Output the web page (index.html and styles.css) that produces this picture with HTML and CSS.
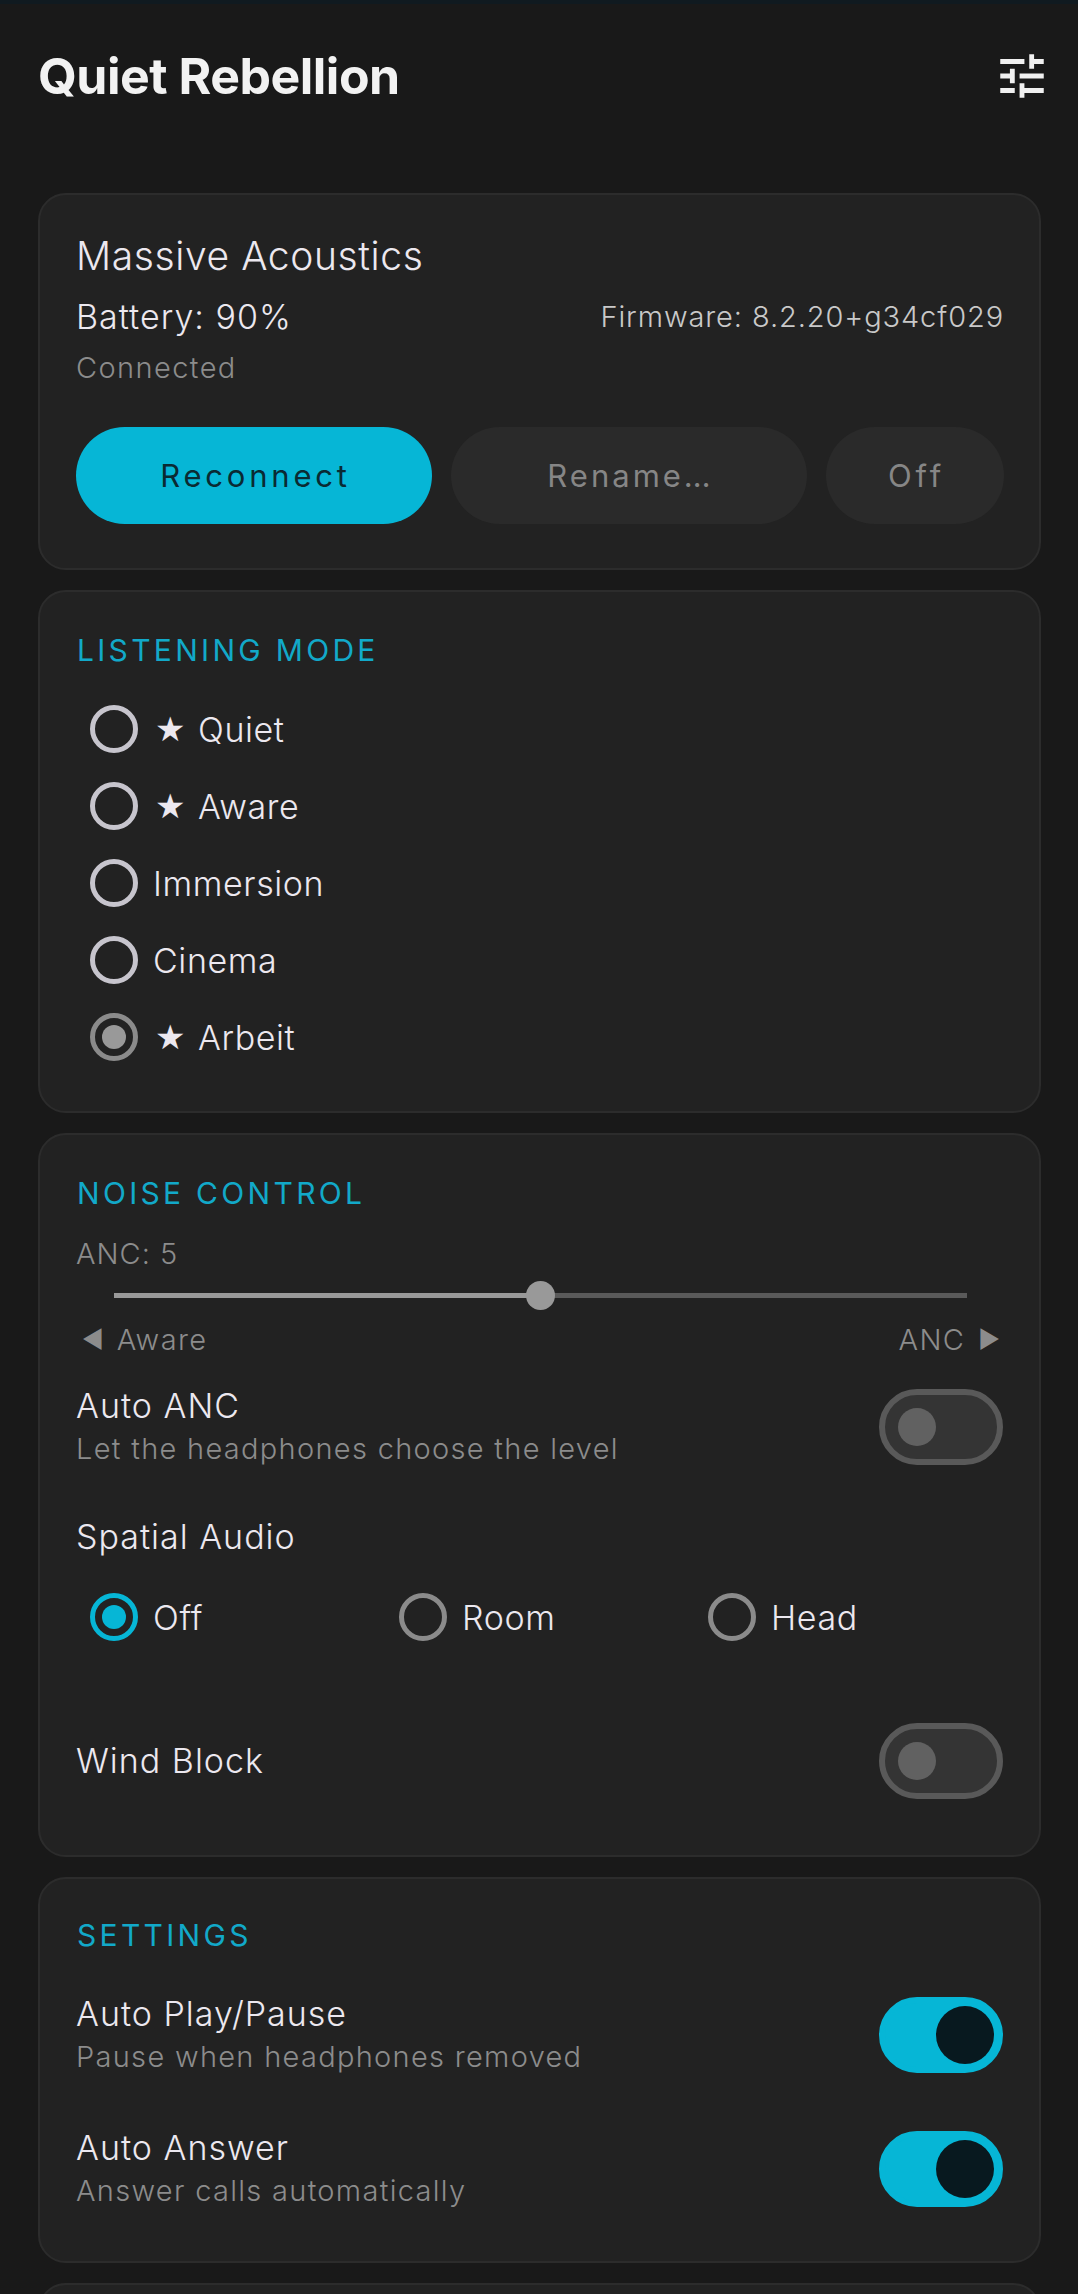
FILE: index.html
```html
<!DOCTYPE html>
<html>

<head>
  <title>Quiet Rebellion</title>
  <link rel="stylesheet" href="styles.css">
</head>

<body>
  <div class="status-strip"></div>
  <header class="app-bar">
    <h1>Quiet Rebellion</h1>
    <svg class="tune-icon" viewBox="0 0 24 24">
      <path d="M3 17v2h6v-2H3zM3 5v2h10V5H3zm10 16v-2h8v-2h-8v-2h-2v6h2zM7 9v2H3v2h4v2h2V9H7zm14 4v-2H11v2h10zm-6-4h2V7h4V5h-4V3h-2v6z"></path>
    </svg>
  </header>

  <main class="cards">
    <section class="card device-card">
      <div class="device-name">Massive Acoustics</div>
      <div class="device-info">
        <span class="battery">Battery: 90%</span>
        <span class="firmware">Firmware: 8.2.20+g34cf029</span>
      </div>
      <div class="connection">Connected</div>
      <div class="device-actions">
        <button class="btn btn-primary">Reconnect</button>
        <button class="btn btn-rename">Rename…</button>
        <button class="btn">Off</button>
      </div>
    </section>

    <section class="card mode-card">
      <h2>LISTENING MODE</h2>
      <div class="mode-list">
        <label class="radio-row"><span class="radio"></span><span class="star">★</span><span class="radio-text">Quiet</span></label>
        <label class="radio-row"><span class="radio"></span><span class="star">★</span><span class="radio-text">Aware</span></label>
        <label class="radio-row"><span class="radio"></span><span class="radio-text">Immersion</span></label>
        <label class="radio-row"><span class="radio"></span><span class="radio-text">Cinema</span></label>
        <label class="radio-row"><span class="radio radio-muted"></span><span class="star">★</span><span class="radio-text">Arbeit</span></label>
      </div>
    </section>

    <section class="card noise-card">
      <h2>NOISE CONTROL</h2>
      <div class="anc-value">ANC: 5</div>
      <div class="slider">
        <div class="slider-fill"></div>
        <div class="slider-thumb"></div>
      </div>
      <div class="slider-labels">
        <span class="slider-label"><span class="arrow">◄</span>Aware</span>
        <span class="slider-label">ANC<span class="arrow">►</span></span>
      </div>
      <div class="switch-row auto-anc">
        <div>
          <div class="row-title">Auto ANC</div>
          <div class="row-sub">Let the headphones choose the level</div>
        </div>
        <div class="switch"></div>
      </div>
      <div class="row-title spatial-title">Spatial Audio</div>
      <div class="spatial-options">
        <label class="radio-row"><span class="radio radio-on"></span><span class="radio-text">Off</span></label>
        <label class="radio-row"><span class="radio radio-grey"></span><span class="radio-text">Room</span></label>
        <label class="radio-row"><span class="radio radio-grey"></span><span class="radio-text">Head</span></label>
      </div>
      <div class="switch-row wind-block">
        <div class="row-title">Wind Block</div>
        <div class="switch"></div>
      </div>
    </section>

    <section class="card settings-card">
      <h2>SETTINGS</h2>
      <div class="switch-row auto-play">
        <div>
          <div class="row-title">Auto Play/Pause</div>
          <div class="row-sub">Pause when headphones removed</div>
        </div>
        <div class="switch switch-on"></div>
      </div>
      <div class="switch-row auto-answer">
        <div>
          <div class="row-title">Auto Answer</div>
          <div class="row-sub">Answer calls automatically</div>
        </div>
        <div class="switch switch-on"></div>
      </div>
    </section>

    <section class="card last-card"></section>
  </main>
</body>

</html>
```

FILE: styles.css
```css
html,
body {
  height: 2294px;
  margin: 0;
  overflow: hidden;
}

body {
  background-color: #191919;
  color: #ece8ef;
  font-family: 'Inter', sans-serif;
  font-weight: 300;
}

.status-strip {
  height: 4px;
  background-color: #101a20;
}

.app-bar {
  height: 148px;
  padding: 0 27px 4px 38px;
  box-sizing: border-box;
  display: flex;
  align-items: center;
  justify-content: space-between;
}

.app-bar h1 {
  margin: 0;
  color: #f2f2f2;
  font-size: 50px;
  font-weight: 700;
  letter-spacing: -0.5px;
}

.tune-icon {
  width: 58px;
  height: 58px;
  fill: #f0f0f0;
}

.cards {
  margin: 41px 37px 0 38px;
  display: flex;
  flex-direction: column;
  gap: 20px;
}

.card {
  box-sizing: border-box;
  padding: 0 35px 0 36px;
  background-color: #222222;
  border: 2px solid #2c2c2c;
  border-radius: 28px;
}

.card h2 {
  margin: 0 0 0 1px;
  color: #12a9c9;
  font-size: 30px;
  font-weight: 400;
  line-height: 36px;
  letter-spacing: 3.3px;
}

.device-card {
  height: 377px;
  padding-top: 38px;
}

.device-name {
  font-size: 39px;
  line-height: 46px;
  letter-spacing: 0.6px;
}

.device-info {
  margin-top: 15px;
  height: 44px;
  display: flex;
  align-items: center;
  justify-content: space-between;
}

.battery {
  font-size: 34px;
  letter-spacing: 1px;
}

.firmware {
  font-size: 29px;
  letter-spacing: 0.9px;
  color: #c9c9c9;
}

.connection {
  margin-top: 12px;
  color: #8c8c8c;
  font-size: 29px;
  line-height: 36px;
  letter-spacing: 1.4px;
}

.device-actions {
  margin-top: 41px;
  display: grid;
  grid-template-columns: 2fr 2fr 1fr;
  gap: 19px;
}

.btn {
  height: 97px;
  padding: 0 0 0 3px;
  border: none;
  border-radius: 49px;
  background-color: #2a2a2a;
  color: #868686;
  font-family: inherit;
  font-size: 31px;
  letter-spacing: 3.8px;
}

.btn-primary {
  background-color: #06b6d6;
  color: #0a2a33;
}

.btn-rename {
  letter-spacing: 3px;
}

.mode-card {
  height: 523px;
  padding-top: 40px;
}

.mode-list {
  margin-top: 37px;
  display: flex;
  flex-direction: column;
  gap: 29px;
}

.radio-row {
  display: flex;
  align-items: center;
  height: 48px;
  padding-left: 14px;
}

.radio {
  box-sizing: border-box;
  width: 48px;
  height: 48px;
  border: 5px solid #c7c5cd;
  border-radius: 50%;
  display: flex;
  align-items: center;
  justify-content: center;
  margin-right: 15px;
  flex: none;
}

.radio-muted {
  border-color: #8b8b8b;
}

.radio-muted::after,
.radio-on::after {
  content: "";
  width: 24px;
  height: 24px;
  border-radius: 50%;
  background-color: #999999;
}

.radio-on {
  border-color: #06b6d6;
}

.radio-on::after {
  background-color: #06b6d6;
}

.radio-grey {
  border-color: #8b8b8b;
}

.star {
  font-family: 'DejaVu Sans', sans-serif;
  font-size: 34px;
  width: 45px;
  padding-left: 2px;
  box-sizing: border-box;
}

.radio-text {
  font-size: 34px;
  letter-spacing: 0.6px;
}

.noise-card {
  height: 724px;
  padding-top: 40px;
}

.anc-value {
  margin-top: 25px;
  color: #8c8c8c;
  font-size: 29px;
  line-height: 36px;
  letter-spacing: 1px;
}

.slider {
  position: relative;
  margin: 21px 37px 0 38px;
  height: 5px;
  background-color: #5a5a5a;
}

.slider-fill {
  width: 50%;
  height: 100%;
  background-color: #999999;
}

.slider-thumb {
  position: absolute;
  left: 50%;
  top: -12px;
  width: 29px;
  height: 29px;
  margin-left: -15px;
  border-radius: 50%;
  background-color: #999999;
}

.slider-labels {
  margin-top: 24px;
  padding: 0 4px 0 6px;
  display: flex;
  justify-content: space-between;
  color: #8c8c8c;
  font-size: 29px;
  line-height: 36px;
  letter-spacing: 1.4px;
}

.slider-label {
  display: flex;
  align-items: center;
  gap: 13px;
}

.arrow {
  font-size: 24px;
  letter-spacing: 0;
}

.switch-row {
  display: flex;
  align-items: center;
  justify-content: space-between;
}

.row-title {
  font-size: 34px;
  line-height: 44px;
  letter-spacing: 1px;
}

.row-sub {
  color: #8c8c8c;
  font-size: 29px;
  line-height: 42px;
  letter-spacing: 1.3px;
}

.auto-anc {
  margin-top: 26px;
}

.spatial-title {
  margin-top: 45px;
}

.spatial-options {
  margin-top: 34px;
  display: grid;
  grid-template-columns: repeat(3, 309px);
}

.wind-block {
  margin-top: 82px;
}

.switch {
  box-sizing: border-box;
  width: 124px;
  height: 76px;
  margin-right: 1px;
  padding: 0 13px;
  display: flex;
  align-items: center;
  background-color: #343434;
  border: 6px solid #595959;
  border-radius: 38px;
}

.switch::after {
  content: "";
  width: 38px;
  height: 38px;
  border-radius: 50%;
  background-color: #616161;
}

.switch-on {
  padding: 0 3px;
  justify-content: flex-end;
  background-color: #06b6d6;
  border-color: #06b6d6;
}

.switch-on::after {
  width: 58px;
  height: 58px;
  background-color: #08191f;
}

.settings-card {
  height: 386px;
  padding-top: 38px;
}

.auto-play {
  margin-top: 39px;
}

.auto-answer {
  margin-top: 48px;
}

.last-card {
  height: 80px;
}
```
